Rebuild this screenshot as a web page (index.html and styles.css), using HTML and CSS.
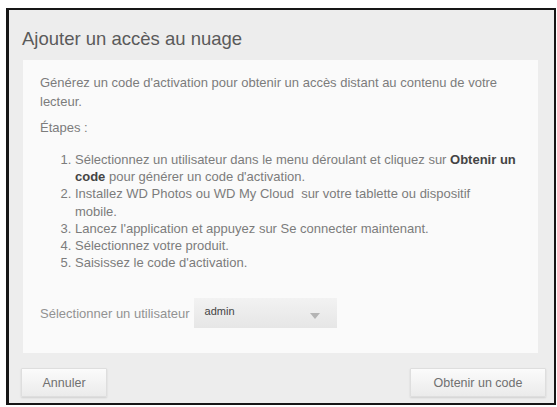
FILE: index.html
```html
<!DOCTYPE html>
<html lang="fr">
<head>
<meta charset="utf-8">
<title>Ajouter un accès au nuage</title>
<link rel="stylesheet" href="styles.css">
</head>
<body>
<div class="dialog">
  <h1 class="title">Ajouter un accès au nuage</h1>
  <div class="panel">
    <p class="intro">Générez un code d'activation pour obtenir un accès distant au contenu de votre lecteur.</p>
    <p class="steps-label">Étapes :</p>
    <ol class="steps">
      <li>Sélectionnez un utilisateur dans le menu déroulant et cliquez sur <b>Obtenir un code</b> pour générer un code d'activation.</li>
      <li>Installez WD Photos ou WD My Cloud&nbsp; sur votre tablette ou dispositif<br>mobile.</li>
      <li>Lancez l'application et appuyez sur Se connecter maintenant.</li>
      <li>Sélectionnez votre produit.</li>
      <li>Saisissez le code d'activation.</li>
    </ol>
    <div class="user-row">
      <span class="user-label">Sélectionner un utilisateur</span>
      <div class="select">
        <span class="select-value">admin</span>
        <svg class="select-arrow" width="10" height="6" viewBox="0 0 10 6"><path d="M0 0 L10 0 L5 6 Z" fill="#b4b4b4"/></svg>
      </div>
    </div>
  </div>
  <div class="footer">
    <button class="btn btn-cancel">Annuler</button>
    <button class="btn btn-get">Obtenir un code</button>
  </div>
</div>
</body>
</html>
```
FILE: styles.css
```css
html, body {
  margin: 0;
  padding: 0;
  background: #ffffff;
}
body {
  font-family: "Liberation Sans", Arial, sans-serif;
  padding-top: 8px;
  padding-left: 6px;
}
.dialog {
  width: 545px;
  height: 393px;
  border: 2px solid #161616;
  border-left-width: 3px;
  background: #ededed;
  display: flex;
  flex-direction: column;
}
.title {
  margin: 18px 0 10px 13px;
  font-size: 18.5px;
  line-height: 22px;
  font-weight: normal;
  color: #5a5a5a;
}
.panel {
  margin-left: 14px;
  width: 515px;
  height: 293px;
  box-sizing: border-box;
  padding: 13px 8px 0 17px;
  background: #fafafa;
  color: #7c7c7c;
  font-size: 13px;
}
.intro {
  margin: 0;
  line-height: 19px;
  padding-right: 20px;
}
.steps-label {
  margin: 7px 0 0 0;
  line-height: 19px;
}
.steps {
  margin: 14px 0 0 0;
  padding-left: 35px;
  line-height: 17.2px;
}
.steps b {
  color: #444444;
}
.user-row {
  margin-top: 27px;
  display: flex;
  align-items: center;
  gap: 4px;
}
.user-label {
  color: #929292;
  line-height: 17px;
}
.select {
  width: 143px;
  height: 30px;
  box-sizing: border-box;
  background: linear-gradient(#f2f2f2, #e6e6e6);
  position: relative;
  display: flex;
  align-items: flex-start;
  padding: 6px 0 0 11px;
}
.select-value {
  font-size: 11px;
  line-height: 14px;
  color: #444444;
}
.select-arrow {
  position: absolute;
  right: 17px;
  top: 15px;
}
.footer {
  flex: 1;
  display: flex;
  justify-content: space-between;
  align-items: flex-start;
  padding: 15px 8px 0 12px;
}
.btn {
  height: 29px;
  font-family: "Liberation Sans", Arial, sans-serif;
  font-size: 12.5px;
  color: #707070;
  background: linear-gradient(#fbfbfb, #ebebeb);
  border: 1px solid #dedede;
  border-radius: 1px;
  box-shadow: 0 1px 2px rgba(0,0,0,0.12);
  padding: 0;
}
.btn-cancel {
  width: 86px;
}
.btn-get {
  width: 136px;
}
```
